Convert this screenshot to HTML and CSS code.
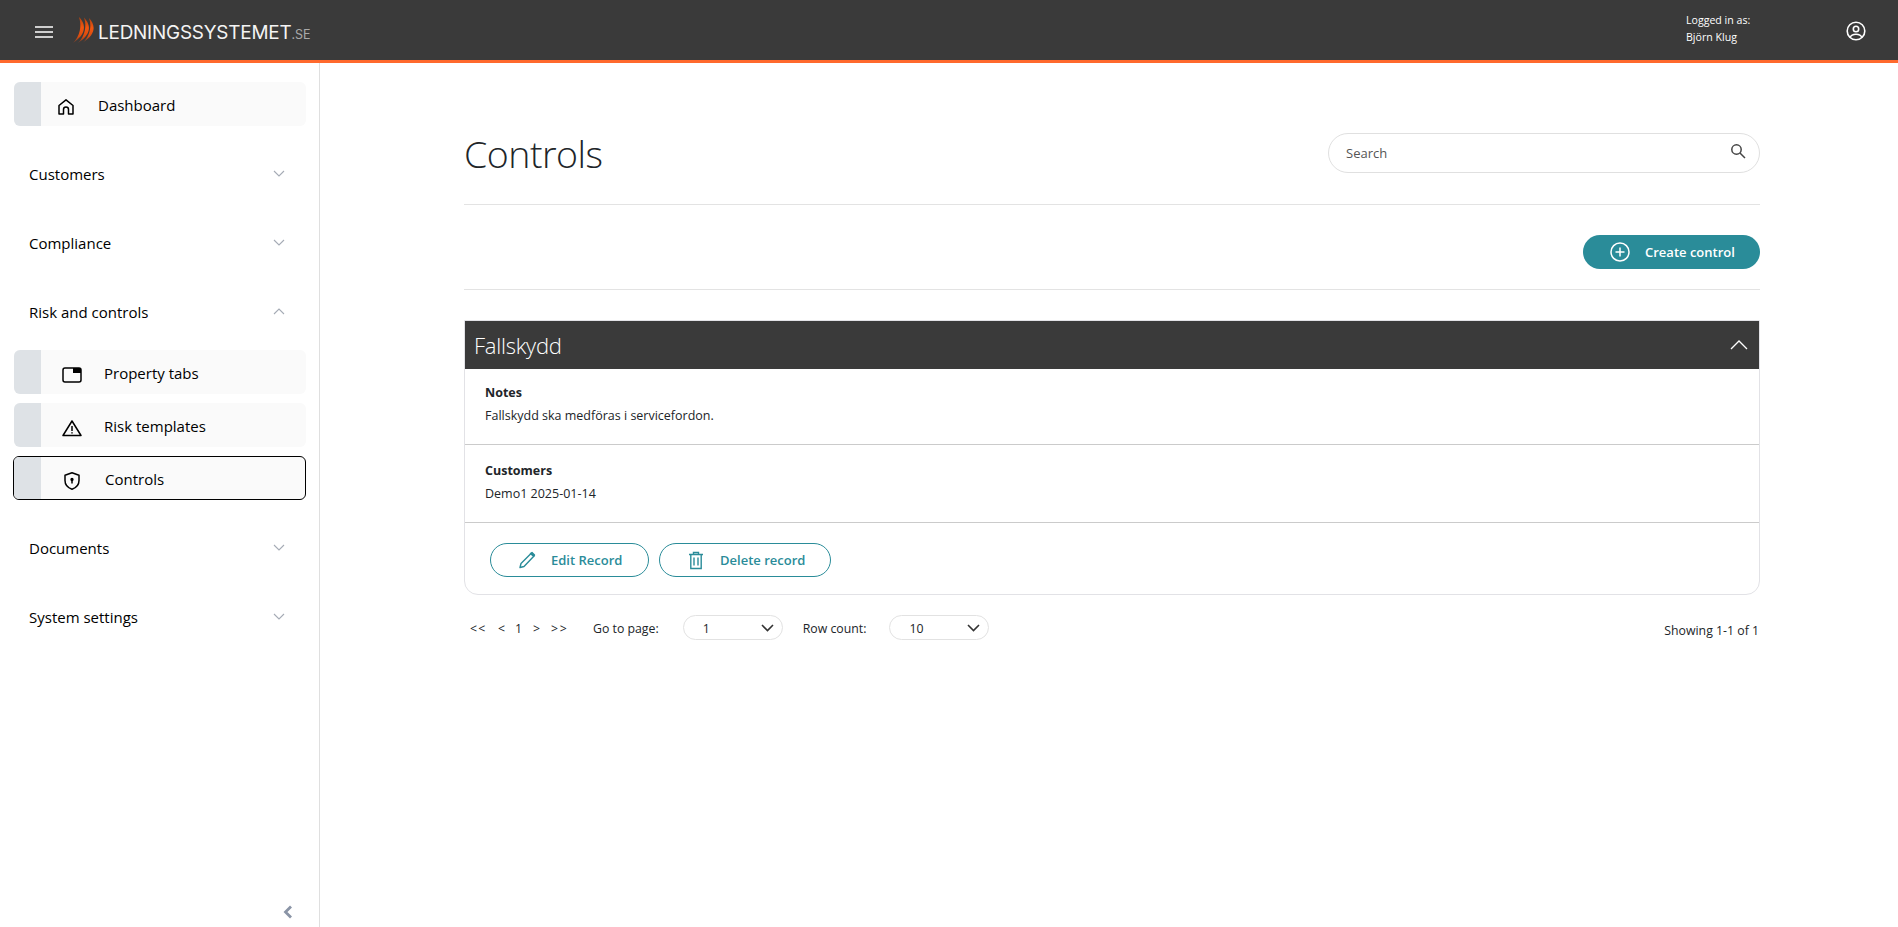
FILE: index.html
```html
<!DOCTYPE html>
<html lang="en">
<head>
<meta charset="utf-8">
<title>Controls</title>
<link rel="stylesheet" href="styles.css">
</head>
<body>
<header class="topbar">
  <button class="burger" aria-label="Menu"><svg width="18" height="12" viewBox="0 0 18 12"><path d="M0 1h18M0 6h18M0 11h18" stroke="#fff" stroke-width="1.6"/></svg></button>
  <div class="logo">
    <svg class="flame" width="22" height="26" viewBox="0 0 22 26">
      <defs><linearGradient id="fg" x1="0" y1="0" x2="0" y2="1"><stop offset="0" stop-color="#b0420f"/><stop offset=".4" stop-color="#f2560f"/><stop offset=".75" stop-color="#d84c10"/><stop offset="1" stop-color="#6b4030"/></linearGradient></defs>
      <path d="M6 0C13 7 14 17 0 26 7 19 9 9 6 0z" fill="url(#fg)"/>
      <path d="M11 0.500C18 8 19 17 5 26 12 19 14 9 11 0.500z" fill="url(#fg)"/>
      <path d="M16 1C22.500 8 23.500 17 10 25.500 17 19 19 9 16 1z" fill="url(#fg)"/>
    </svg>
    <span class="logo-main">LEDNINGSSYSTEMET</span><span class="logo-se">.SE</span>
  </div>
  <div class="user">
    <div class="user-text"><div>Logged in as:</div><div>Björn Klug</div></div>
    <svg class="user-icon" width="20" height="20" viewBox="0 0 20 20" fill="none" stroke="#fff" stroke-width="1.600"><circle cx="10" cy="10" r="8.800"/><circle cx="10" cy="8" r="2.700"/><path d="M4 16.500c1-2.500 3.500-3.300 6-3.300s5 .8 6 3.300"/></svg>
  </div>
</header>
<div class="layout">
  <aside class="sidebar">
    <a class="item item-top"><span class="item-bar"></span><svg class="item-icon" width="18" height="18" viewBox="0 0 18 18" fill="none" stroke="#000" stroke-width="1.500" stroke-linejoin="round"><path d="M2 7.500 9 1.800l7 5.700V16h-4.500v-4.500a2.500 2.500 0 0 0-5 0V16H2z"/></svg><span class="item-label">Dashboard</span></a>
    <div class="group"><span>Customers</span><svg class="chev" width="12" height="7" viewBox="0 0 12 7" fill="none"><path d="M1 1l5 5 5-5"/></svg></div>
    <div class="group"><span>Compliance</span><svg class="chev" width="12" height="7" viewBox="0 0 12 7" fill="none"><path d="M1 1l5 5 5-5"/></svg></div>
    <div class="group"><span>Risk and controls</span><svg class="chev" width="12" height="7" viewBox="0 0 12 7" fill="none"><path d="M1 6l5-5 5 5"/></svg></div>
    <div class="subs">
      <a class="item sub"><span class="item-bar"></span><svg class="item-icon" width="20" height="18" viewBox="0 0 20 18" fill="none"><rect x="1" y="2" width="18" height="14" rx="2" stroke="#000" stroke-width="1.500"/><path d="M11 2h8v5h-8z" fill="#000"/></svg><span class="item-label">Property tabs</span></a>
      <a class="item sub"><span class="item-bar"></span><svg class="item-icon" width="20" height="18" viewBox="0 0 20 18" fill="none" stroke="#000" stroke-width="1.500" stroke-linejoin="round"><path d="M10 2 1 16.500h18z"/><path d="M10 7v5M10 13.200v1.300"/></svg><span class="item-label">Risk templates</span></a>
      <a class="item sub active"><span class="item-bar"></span><svg class="item-icon" width="20" height="20" viewBox="0 0 20 20" fill="none" stroke="#000" stroke-width="1.500" stroke-linejoin="round"><path d="M10 1.800 3 4.300v5.200c0 4.200 3 7.300 7 8.700 4-1.400 7-4.500 7-8.700V4.300z"/><circle cx="10" cy="8.500" r=".9" fill="#000"/><path d="M10 9v3.500"/></svg><span class="item-label">Controls</span></a>
    </div>
    <div class="group"><span>Documents</span><svg class="chev" width="12" height="7" viewBox="0 0 12 7" fill="none"><path d="M1 1l5 5 5-5"/></svg></div>
    <div class="group"><span>System settings</span><svg class="chev" width="12" height="7" viewBox="0 0 12 7" fill="none"><path d="M1 1l5 5 5-5"/></svg></div>
    <div class="collapse"><svg width="10" height="14" viewBox="0 0 10 14" fill="none"><path d="M8 1.500 2.500 7 8 12.500" stroke="#8a94a6" stroke-width="2.800"/></svg></div>
  </aside>
  <main class="main">
    <div class="title-row">
      <h1>Controls</h1>
      <div class="search"><span>Search</span><svg width="16" height="16" viewBox="0 0 16 16" fill="none" stroke="#444" stroke-width="1.500"><circle cx="6.500" cy="6.500" r="4.700"/><path d="M10 10l5 5"/></svg></div>
    </div>
    <div class="action-row">
      <button class="create"><svg width="20" height="20" viewBox="0 0 20 20" fill="none" stroke="#fff" stroke-width="1.500"><circle cx="10" cy="10" r="9"/><path d="M10 5.500v9M5.500 10h9"/></svg><span>Create control</span></button>
    </div>
    <section class="card">
      <div class="card-head"><h2>Fallskydd</h2><svg width="18" height="10" viewBox="0 0 18 10" fill="none"><path d="M1 9l8-8 8 8" stroke="#fff" stroke-width="1.300"/></svg></div>
      <div class="field field-notes"><div class="field-label">Notes</div><div class="field-value">Fallskydd ska medföras i servicefordon.</div></div>
      <div class="field"><div class="field-label">Customers</div><div class="field-value">Demo1 2025-01-14</div></div>
      <div class="card-actions">
        <button class="outline edit"><svg width="18" height="18" viewBox="0 0 18 18" fill="none" stroke="#2a8c99" stroke-width="1.400" stroke-linejoin="round"><path d="M13 2.500 16 5 6 15.500l-4 1 1-4z"/><path d="M12.500 2.500l1.500-1 2.500 2.500-1 1.300z" fill="#2a8c99"/></svg><span>Edit Record</span></button>
        <button class="outline del"><svg width="16" height="19" viewBox="0 0 16 19" fill="none" stroke="#2a8c99" stroke-width="1.400"><path d="M1 3.500h14M5.500 3.500V1.500h5v2M2.800 3.500v14h10.400v-14M6 6.500v8M10 6.500v8"/></svg><span>Delete record</span></button>
      </div>
    </section>
    <div class="pager">
      <div class="pages"><span>&lt;&lt;</span><span>&lt;</span><span>1</span><span>&gt;</span><span>&gt;&gt;</span></div>
      <span class="pager-label goto">Go to page:</span>
      <div class="select"><span>1</span><svg width="13" height="8" viewBox="0 0 13 8" fill="none"><path d="M1 1l5.500 5.500L12 1" stroke="#333" stroke-width="1.600"/></svg></div>
      <span class="pager-label rows">Row count:</span>
      <div class="select"><span>10</span><svg width="13" height="8" viewBox="0 0 13 8" fill="none"><path d="M1 1l5.500 5.500L12 1" stroke="#333" stroke-width="1.600"/></svg></div>
      <span class="showing">Showing 1-1 of 1</span>
    </div>
  </main>
</div>
</body>
</html>
```
FILE: styles.css
```css
* { box-sizing: border-box; }
html, body { margin: 0; height: 100%; overflow: hidden; }
body { background: #fff; color: #212529; font-family: "Open Sans", "Noto Sans", sans-serif; }
button { font-family: inherit; cursor: pointer; }
h1, h2 { margin: 0; }

.topbar { height: 63px; background: #3a3a3a; border-bottom: 3px solid #ff692d; display: flex; align-items: center; padding-left: 35px; padding-right: 32px; }
.burger { background: none; border: 0; padding: 0; width: 18px; height: 12px; display: flex; margin-top: 4px; }
.logo { display: flex; align-items: baseline; margin-left: 20px; padding-top: 4px; }
.flame { align-self: center; margin-right: 3px; margin-top: -4px; }
.logo-main { font-family: Inter, sans-serif; font-size: 18.900px; color: #f4f4f4; letter-spacing: -.2px; }
.logo-se { font-family: Inter, sans-serif; font-size: 12.500px; color: #a9a9a9; }
.user { margin-left: auto; display: flex; align-items: center; }
.user-text { color: #fff; font-size: 10.600px; line-height: 17px; width: 160px; margin-top: -3px; }
.user-icon { margin-top: 1px; }

.layout { display: flex; height: 864px; }
.sidebar { width: 320px; flex: none; border-right: 1px solid #dfdfdf; padding: 19px 13px 0 14px; display: flex; flex-direction: column; }
.item { display: flex; align-items: center; height: 44px; background: #fafafa; border-radius: 6px; overflow: hidden; color: #000; font-size: 15px; }
.item-bar { width: 27px; height: 100%; background: #dee2e6; flex: none; }
.item-label { padding-top: 2px; }
.item-icon { margin-top: 6px; }
.item-top .item-icon { margin-left: 16px; }
.item-top .item-label { margin-left: 23px; }
.item-top { margin-bottom: 14px; }
.sub .item-icon { margin-left: 21px; }
.sub .item-label { margin-left: 22px; }
.subs { display: flex; flex-direction: column; gap: 9px; margin-top: 3px; margin-bottom: 14px; }
.active { border: 1px solid #000; margin-left: -1px; }
.active .item-label { margin-left: 23px; }
.group { height: 69px; display: flex; align-items: center; justify-content: space-between; padding-left: 15px; padding-right: 21px; padding-bottom: 2px; font-size: 15px; color: #000; }
.chev path { stroke: #a5abb5; stroke-width: 1.100; }
.collapse { margin-top: auto; height: 22px; display: flex; justify-content: flex-end; padding-right: 13px; }

.main { flex: 1; padding: 60px 138px 0 144px; min-width: 0; }
.title-row { display: flex; justify-content: space-between; align-items: flex-start; height: 82px; border-bottom: 1px solid #e3e3e3; padding-top: 10px; }
h1 { font-weight: 300; font-size: 37.500px; color: #212529; line-height: 44px; letter-spacing: -.5px; margin-top: -1px; }
.search { width: 432px; height: 40px; border: 1px solid #e0e0e0; border-radius: 20px; display: flex; align-items: center; justify-content: space-between; padding: 0 13px 4px 17px; font-size: 13px; color: #555; }
.search span { padding-top: 4px; }
.action-row { display: flex; justify-content: flex-end; height: 85px; padding-top: 30px; border-bottom: 1px solid #e3e3e3; }
.create { width: 177px; height: 34px; background: #2a8c99; color: #fff; border: 0; border-radius: 17px; display: flex; align-items: center; padding: 0 0 0 27px; font-size: 13px; font-weight: 600; }
.create span { margin-left: 15px; margin-top: -1px; }

.card { margin-top: 30px; height: 275px; border: 1px solid #e2e2e6; border-radius: 0 0 14px 14px; display: flex; flex-direction: column; }
.card-head { height: 48px; background: #3a3a3a; display: flex; align-items: center; justify-content: space-between; padding: 0 11px 0 9px; color: #fff; flex: none; }
h2 { font-weight: 300; font-size: 22px; letter-spacing: -.25px; color: #fff; }
.field { height: 78px; padding: 14px 20px 0; border-bottom: 1px solid #cbcbcb; }
.field-notes { height: 76px; padding-top: 12px; }
.field-label { font-weight: 700; font-size: 12.500px; line-height: 23px; color: #212529; }
.field-value { font-size: 12.500px; line-height: 23px; color: #212529; }
.card-actions { display: flex; gap: 10px; padding: 20px 25px 0; }
.outline { height: 34px; border: 1px solid #2a8c99; background: #fff; border-radius: 17px; color: #2a8c99; font-size: 13px; font-weight: 600; display: flex; align-items: center; padding: 0; }
.edit { width: 159px; padding-left: 27px; }
.edit span { margin-left: 15px; }
.del { width: 172px; padding-left: 28px; }
.del span { margin-left: 16px; }

.pager { display: flex; align-items: center; height: 25px; margin-top: 20px; font-size: 12.300px; color: #212529; }
.pages { display: flex; width: 129px; padding-left: 6px; padding-top: 2px; }
.pages span:nth-child(1) { width: 28px; letter-spacing: 1.300px; }
.pages span:nth-child(2) { width: 17px; }
.pages span:nth-child(3) { width: 18px; }
.pages span:nth-child(4) { width: 18px; }
.pages span:nth-child(5) { letter-spacing: 1.600px; }
.pager-label { margin-right: 24px; padding-top: 2px; }
.rows { margin-right: 23px; }
.select { width: 100px; height: 25px; border: 1px solid #e2e2e2; border-radius: 13px; display: flex; align-items: center; justify-content: space-between; padding: 0 8px 0 19px; margin-right: 20px; }
.select span { padding-top: 1px; }
.showing { margin-left: auto; margin-top: 6px; margin-right: 1px; }
```
